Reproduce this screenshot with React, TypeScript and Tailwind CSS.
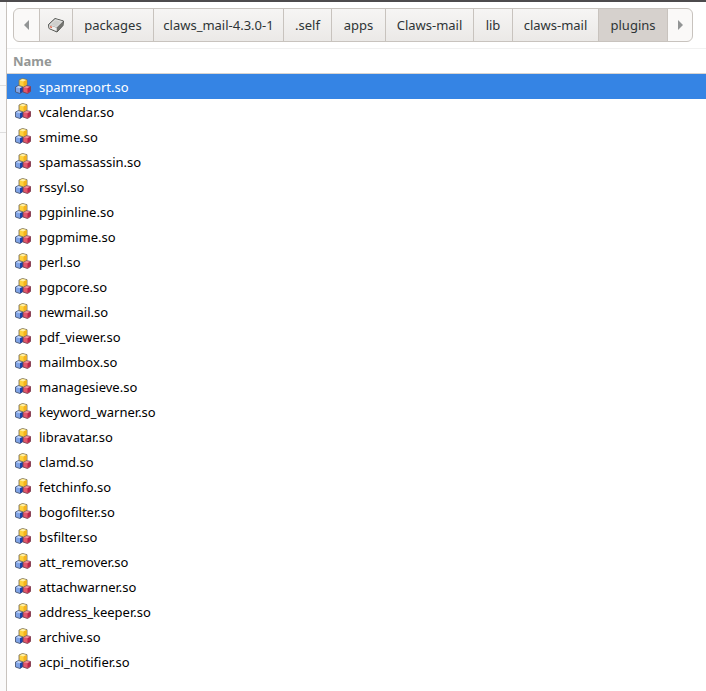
import { useState } from "react"
import clsx from "clsx"

const crumbs = [
    { label: "packages", width: "w-[81px]" },
    { label: "claws_mail-4.3.0-1", width: "w-[130px]" },
    { label: ".self", width: "w-[48px]" },
    { label: "apps", width: "w-[54px]" },
    { label: "Claws-mail", width: "w-[88px]" },
    { label: "lib", width: "w-[39px]" },
    { label: "claws-mail", width: "w-[86px]" },
    { label: "plugins", width: "w-[69px]" },
]

const files = [
    "spamreport.so",
    "vcalendar.so",
    "smime.so",
    "spamassassin.so",
    "rssyl.so",
    "pgpinline.so",
    "pgpmime.so",
    "perl.so",
    "pgpcore.so",
    "newmail.so",
    "pdf_viewer.so",
    "mailmbox.so",
    "managesieve.so",
    "keyword_warner.so",
    "libravatar.so",
    "clamd.so",
    "fetchinfo.so",
    "bogofilter.so",
    "bsfilter.so",
    "att_remover.so",
    "attachwarner.so",
    "address_keeper.so",
    "archive.so",
    "acpi_notifier.so",
]

function DriveIcon() {
    return (
        <svg width="18" height="18" viewBox="0 0 18 18" aria-hidden="true">
            <path d="M1.5 8.5 8 2.5 16.5 5 16 9.5 10 16 2 12.5Z" fill="#777" stroke="#555753" strokeLinejoin="round" />
            <path d="M2 8.7 8.2 3 16 5.3 9.7 11.5Z" fill="#dededc" />
            <path d="M4 8.6 8.5 4.2 14 6 9.3 10.5Z" fill="#cfcfcc" />
            <path d="M2 9 9.7 11.8V15.3L2.4 12.3Z" fill="#f0f0ee" />
            <path d="M10 12 15.9 6V9.3L10 15.3Z" fill="#74746f" />
            <path d="M3 10.7 5 11.5" stroke="#e0674b" strokeWidth="1.4" />
        </svg>
    )
}

function CubesIcon() {
    return (
        <svg className="block" width="16" height="17" viewBox="0 0 16 17" aria-hidden="true">
            <path d="M.5 9 3.5 7.5 8 8.5V13.5L5 15.5.5 14Z" fill="#7fa3e6" stroke="#4a5774" strokeLinejoin="round" strokeWidth=".9" />
            <path d="M1 9.2 3.6 8 7.3 8.8 5 10.3Z" fill="#c3d6f8" />
            <path d="M5 10.3 8 8.8V13.4L5 15.2Z" fill="#1643ab" />
            <path d="M8 9 11 7.5 15.5 8.5V13.5L12.5 15.5 8 14Z" fill="#e2576b" stroke="#764453" strokeLinejoin="round" strokeWidth=".9" />
            <path d="M8.6 9.2 11.2 8 15 8.8 12.5 10.3Z" fill="#f08e9a" />
            <path d="M12.5 10.3 15.2 8.8V13.3L12.5 15.1Z" fill="#b52449" />
            <path d="M4 2 7.5.5 12 1.7V7L8.5 9 4 7.5Z" fill="#ffd23c" stroke="#7d7460" strokeLinejoin="round" strokeWidth=".9" />
            <path d="M4.5 2.3 7.6 1 11.5 2 8.5 3.6Z" fill="#fff1a8" />
            <path d="M8.5 3.6 11.6 2V6.8L8.5 8.6Z" fill="#f6b21c" />
        </svg>
    )
}

function PathBar() {
    return (
        <nav aria-label="Path" className="flex h-[46px] items-start px-1.5 pt-1.5">
            <div className="flex h-[34px] overflow-hidden rounded-md border border-[#c8c3be] bg-[#faf9f8] text-[13px] leading-5 text-[#2e3436]">
                <button aria-label="Back" className="flex w-[25px] items-center justify-center">
                    <svg width="5" height="10" viewBox="0 0 5 10"><path d="M5 0V10L0 5Z" fill="#929595" /></svg>
                </button>
                <button aria-label="Root" className="flex w-[33px] items-center justify-center border-l border-[#c8c3be] bg-linear-to-b from-[#f6f5f4] to-[#ebe9e7]">
                    <DriveIcon />
                </button>
                {crumbs.map((crumb) => (
                    <button
                        key={crumb.label}
                        className={clsx(
                            "flex items-center justify-center border-l border-[#c8c3be] whitespace-nowrap",
                            crumb.width,
                            crumb.label === "plugins" ? "bg-[#d6d1cd]" : "bg-linear-to-b from-[#f6f5f4] to-[#ebe9e7]"
                        )}
                    >
                        {crumb.label}
                    </button>
                ))}
                <button aria-label="Forward" className="flex w-[25px] items-center justify-center border-l border-[#c8c3be]">
                    <svg width="5" height="10" viewBox="0 0 5 10"><path d="M0 0V10L5 5Z" fill="#929595" /></svg>
                </button>
            </div>
        </nav>
    )
}

export default function App() {
    const [selected, setSelected] = useState("spamreport.so")

    return (
        <div className="flex min-h-screen border-t-2 border-[#4d4b4d] bg-white font-['Noto_Sans',sans-serif]">
            <aside className="w-[7px] shrink-0 border-r border-[#c8c3be] bg-[#fafafa]">
                <div className="h-[84px] border-b border-[#dedede]" />
                <div className="h-[47px] border-b border-[#dedede]" />
            </aside>
            <main className="min-w-0 grow">
                <PathBar />
                <table className="w-full border-collapse">
                    <thead>
                        <tr className="h-[25px] border-t border-b border-t-[#f1f1f1] border-b-[#d8d4d0]">
                            <th className="px-1.5 py-0 text-left text-[13px] leading-5 font-bold text-[#949796]">Name</th>
                        </tr>
                    </thead>
                    <tbody>
                        {files.map((file) => (
                            <tr
                                key={file}
                                onClick={() => setSelected(file)}
                                className={clsx("h-[25px]", file === selected ? "bg-[#3584e4] text-white" : "text-black")}
                            >
                                <td className="p-0">
                                    <div className="flex h-[25px] items-center gap-2 px-2 text-[13px] leading-5">
                                        <CubesIcon />
                                        <span className="pt-px">{file}</span>
                                    </div>
                                </td>
                            </tr>
                        ))}
                    </tbody>
                </table>
            </main>
        </div>
    )
}
